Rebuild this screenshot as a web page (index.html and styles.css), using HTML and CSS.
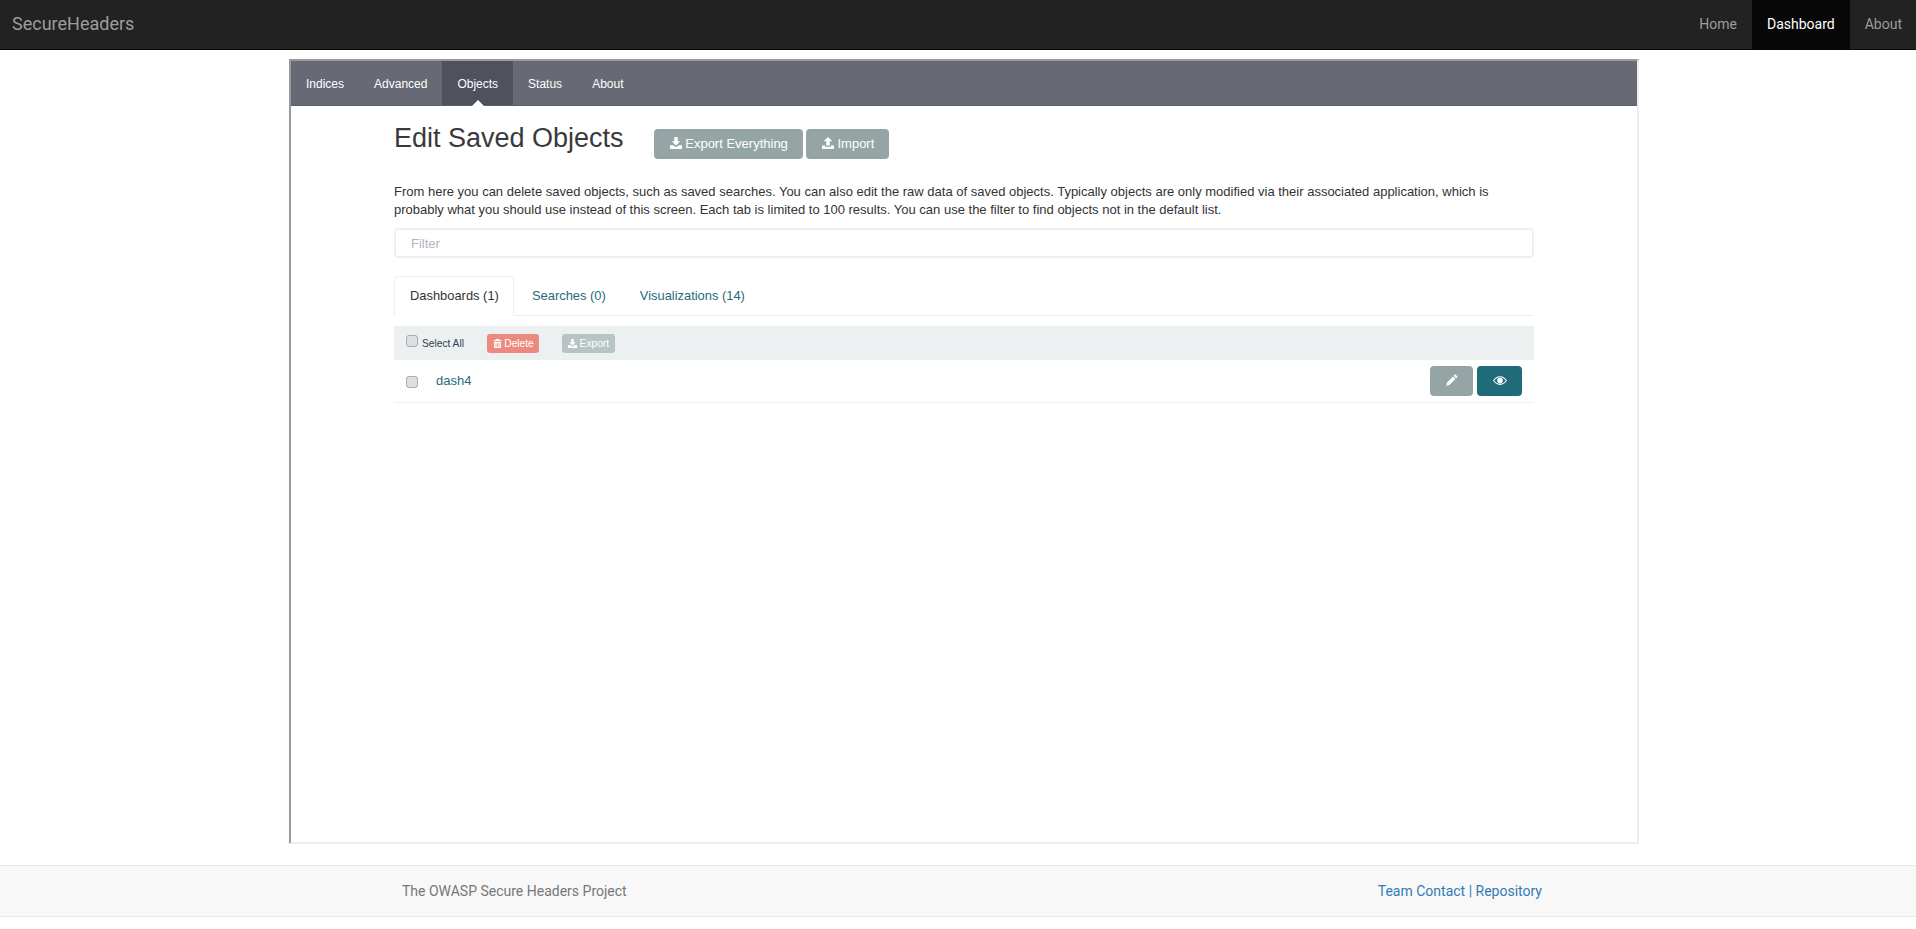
FILE: index.html
```html
<!DOCTYPE html>
<html lang="en">
<head>
  <meta charset="UTF-8">
  <title>SecureHeaders</title>
  <link rel="stylesheet" href="styles.css">
</head>
<body>
  <nav class="navbar">
    <a class="brand">SecureHeaders</a>
    <ul class="nav-links">
      <li><a>Home</a></li>
      <li class="active"><a>Dashboard</a></li>
      <li><a>About</a></li>
    </ul>
  </nav>

  <div class="frame">
    <div class="subnav">
      <a>Indices</a>
      <a>Advanced</a>
      <a class="active">Objects</a>
      <a>Status</a>
      <a>About</a>
    </div>

    <div class="container">
      <div class="title-row">
        <h2>Edit Saved Objects</h2>
        <button class="btn">
          <svg class="icon" viewBox="0 0 14 14"><path d="M5 0h4v5h3L7 10 2 5h3zM0 9.500h3.500L7 12l3.500-2.500H14V14H0z"/></svg>
          Export Everything
        </button>
        <button class="btn btn-import">
          <svg class="icon" viewBox="0 0 14 14"><path d="M7 0l5 5H9v5H5V5H2zM0 10h3.500v1.500h7V10H14v4H0z"/></svg>
          Import
        </button>
      </div>

      <p class="intro">From here you can delete saved objects, such as saved searches. You can also edit the raw data of saved objects. Typically objects are only modified via their associated application, which is probably what you should use instead of this screen. Each tab is limited to 100 results. You can use the filter to find objects not in the default list.</p>

      <input class="filter" type="text" placeholder="Filter">

      <ul class="tabs">
        <li class="active">Dashboards (1)</li>
        <li>Searches (0)</li>
        <li>Visualizations (14)</li>
      </ul>

      <div class="toolbar">
        <label class="select-all"><input class="check" type="checkbox"> Select All</label>
        <button class="btn-xs btn-delete">
          <svg class="icon-xs" viewBox="0 0 12 12"><path d="M4 0h4l1 1.500h2.500V3H.5V1.500H3zM1.500 4h9v8h-9zM3.500 5.500v5h1v-5zM5.500 5.500v5h1v-5zM7.500 5.500v5h1v-5z" fill-rule="evenodd"/></svg>
          Delete
        </button>
        <button class="btn-xs btn-export">
          <svg class="icon-xs" viewBox="0 0 14 14"><path d="M5 0h4v5h3L7 10 2 5h3zM0 9.500h3.500L7 12l3.500-2.500H14V14H0z"/></svg>
          Export
        </button>
      </div>

      <div class="row">
        <input class="check" type="checkbox">
        <a class="row-link">dash4</a>
        <div class="row-actions">
          <button class="btn-icon btn-edit">
            <svg class="icon-pencil" viewBox="0 0 14 14"><path d="M10.800.4l2.800 2.800-1.700 1.700-2.800-2.800zM8.300 2.900l2.800 2.800L4 12.800l-3.600.8.800-3.600z"/></svg>
          </button>
          <button class="btn-icon btn-view">
            <svg class="icon-eye" viewBox="0 0 16 12"><path fill-rule="evenodd" d="M8 1c3.500 0 6.300 2.200 8 5-1.700 2.800-4.500 5-8 5s-6.300-2.200-8-5c1.700-2.800 4.500-5 8-5zM8 2.200C5.400 2.200 3 3.600 1.400 6 3 8.400 5.400 9.800 8 9.800s5-1.400 6.600-3.800C13 3.600 10.600 2.200 8 2.200zM8 2.800a3.200 3.200 0 1 1 0 6.400 3.200 3.200 0 0 1 0-6.400z"/></svg>
          </button>
        </div>
      </div>
    </div>
  </div>

  <footer class="footer">
    <div class="footer-inner">
      <span>The OWASP Secure Headers Project</span>
      <span class="footer-links"><a>Team Contact</a> | <a>Repository</a></span>
    </div>
  </footer>
</body>
</html>
```

FILE: styles.css
```css
* {
  box-sizing: border-box;
}
html, body {
  margin: 0;
  height: 929px;
  overflow: hidden;
  background: #fff;
}
body {
  font-family: "Roboto", sans-serif;
  font-size: 14px;
  color: #333;
}

/* top bar */
.navbar {
  display: flex;
  justify-content: space-between;
  height: 50px;
  padding: 0 0 0 12px;
  background: #222;
  border-bottom: 1px solid #080808;
}
.brand {
  font-size: 18px;
  line-height: 47px;
  color: #9d9d9d;
}
.nav-links {
  display: flex;
  margin: 0;
  padding: 0;
  list-style: none;
}
.nav-links a {
  display: block;
  padding: 0 15px;
  line-height: 49px;
  color: #9d9d9d;
}
.nav-links li:last-child a {
  padding-right: 14px;
}
.nav-links .active {
  background: #080808;
}
.nav-links .active a {
  color: #fff;
}

/* embedded app */
.frame {
  width: 1350px;
  height: 785px;
  margin: 9px 0 0 289px;
  border: 2px solid;
  border-color: #9a9a9a #eee #eee #9a9a9a;
  font-family: "Liberation Sans", Arial, sans-serif;
}
.subnav {
  display: flex;
  height: 45px;
  background: #676a75;
  border-bottom: 1px solid #5c5f69;
}
.subnav a {
  position: relative;
  padding: 0 15px;
  font-size: 12px;
  line-height: 46px;
  color: #fff;
}
.subnav a.active {
  background: #4f525d;
}
.subnav a.active::after {
  content: "";
  position: absolute;
  left: 50%;
  bottom: -1px;
  margin-left: -6px;
  border: 6px solid transparent;
  border-top: 0;
  border-bottom-color: #fff;
}
.container {
  width: 1140px;
  margin: 0 auto;
}
.title-row {
  display: flex;
  align-items: flex-start;
  padding-top: 14px;
}
h2 {
  margin: 0 30px 0 0;
  font-size: 27px;
  font-weight: 400;
  line-height: 36px;
  color: #3a3a3a;
}
.btn {
  height: 30px;
  margin-top: 9px;
  padding: 0 15px 2px 16px;
  background: #95a5a6;
  border: 0;
  border-radius: 4px;
  font: 13px "Liberation Sans", Arial, sans-serif;
  color: #fff;
}
.btn-import {
  margin-left: 3px;
}
.icon {
  width: 12px;
  height: 12px;
  fill: #fff;
  vertical-align: -1px;
}
.intro {
  margin: 24px 0 0;
  font-size: 13px;
  line-height: 18px;
  color: #333;
}
.filter {
  display: block;
  width: 100%;
  height: 30px;
  margin-top: 9px;
  padding: 0 15px;
  border: 2px solid #ecf0f1;
  border-radius: 4px;
  font: 13px "Liberation Sans", Arial, sans-serif;
  outline: none;
}
.filter::placeholder {
  color: #acb6c0;
}
.tabs {
  display: flex;
  height: 40px;
  margin: 18px 0 0;
  padding: 0;
  list-style: none;
  border-bottom: 1px solid #ecf0f1;
  font-size: 12.900px;
  line-height: 38px;
  color: #1f6b7a;
}
.tabs li {
  height: 40px;
  padding: 0 15px;
  margin-right: 2px;
  border: 1px solid transparent;
  white-space: nowrap;
}
.tabs li.active {
  width: 120px;
  border-color: #ecf0f1;
  border-bottom-color: #fff;
  border-radius: 4px 4px 0 0;
  color: #333;
}
.toolbar {
  display: flex;
  align-items: center;
  height: 34px;
  margin-top: 10px;
  padding-left: 12px;
  background: #ecf0f1;
}
.check {
  appearance: none;
  display: inline-block;
  width: 12px;
  height: 12px;
  background: #dedfe0;
  border: 1px solid #a9abad;
  border-radius: 3px;
}
.select-all {
  display: flex;
  align-items: center;
  gap: 4px;
  width: 81px;
  font-size: 10.200px;
  color: #2c3e50;
}
.select-all .check {
  margin: -4px 0 0;
}
.btn-xs {
  height: 19px;
  padding: 0 5.500px;
  border: 0;
  border-radius: 3px;
  font: 10.200px "Liberation Sans", Arial, sans-serif;
  color: #fff;
}
.btn-delete {
  background: #ec8a80;
  margin-right: 23px;
}
.btn-export {
  background: #b8c3c4;
}
.icon-xs {
  width: 9px;
  height: 9px;
  fill: #fff;
  vertical-align: -1px;
}
.row {
  display: flex;
  align-items: center;
  height: 43px;
  padding: 0 12px;
  border-bottom: 1px solid #ecf0f1;
}
.row .check {
  margin: 2px 0 0;
}
.row-link {
  margin-left: 18px;
  margin-top: -2px;
  font-size: 13px;
  color: #1f6b7a;
}
.row-actions {
  display: flex;
  gap: 4px;
  margin-left: auto;
}
.btn-icon {
  width: 43px;
  height: 30px;
  padding: 0;
  border: 0;
  border-radius: 4px;
}
.btn-edit {
  background: #95a5a6;
}
.btn-view {
  width: 45px;
  background: #1f6b7a;
}
.icon-pencil {
  width: 12px;
  height: 12px;
  fill: #fff;
}
.icon-eye {
  width: 14px;
  height: 11px;
  fill: #fff;
}

/* footer */
.footer {
  height: 52px;
  margin-top: 21px;
  background: #f8f8f8;
  border-top: 1px solid #e7e7e7;
  border-bottom: 1px solid #e7e7e7;
}
.footer-inner {
  display: flex;
  justify-content: space-between;
  width: 1140px;
  margin-left: 402px;
  line-height: 50px;
  color: #777;
}
.footer-links {
  color: #337ab7;
}
.footer-links a {
  color: #337ab7;
}
```
